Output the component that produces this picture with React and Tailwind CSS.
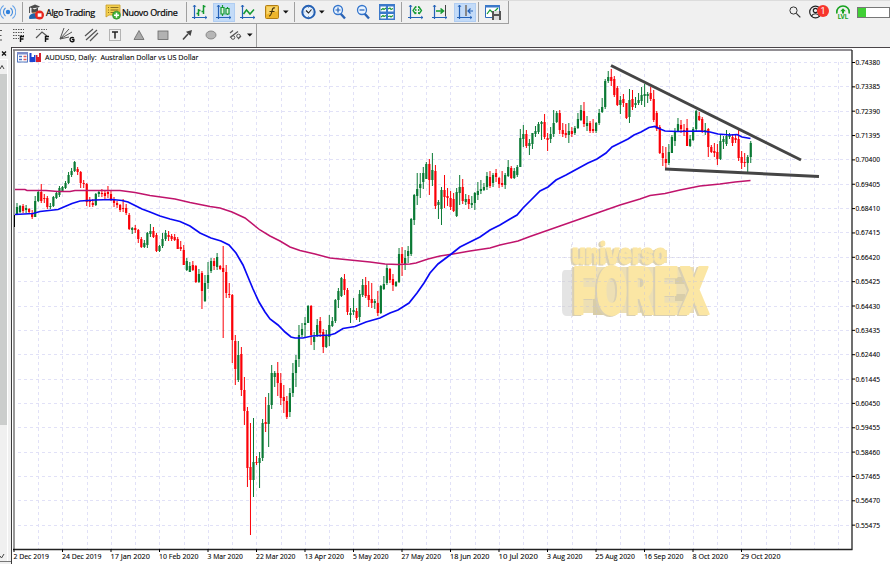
import React from 'react'

const STEP = 3.032
const FIRST_X = 17

// direction, high, body top, body bottom, low
const candleData = `
g 203 207 214 215|g 205 206 212 213|r 204 206 211 213|g 205 208 210 213|r 208 209 212 213|r 210 213 217 219|g 196 201 217 217|g 191 192 201 202|r 184 192 201 203|r 194 198 199 203
r 196 198 207 209|g 203 206 207 209|g 196 197 206 207|g 191 193 198 199|g 186 188 195 197|g 186 187 191 192|g 181 183 188 189|g 172 175 183 184|g 168 171 175 177|g 161 162 171 172
r 167 169 172 175|r 171 172 183 188|r 180 183 184 188|r 183 184 202 206|r 197 201 202 207|r 199 203 205 207|g 193 194 205 206|g 190 192 194 197|r 189 193 194 197|r 191 193 196 199
r 186 192 194 198|r 191 194 200 201|r 197 199 203 207|r 201 203 205 208|r 204 205 210 212|r 199 208 209 212|r 204 208 213 215|r 213 215 229 230|g 227 228 230 234|r 225 228 230 233
r 229 230 239 243|r 237 239 247 248|g 240 243 247 248|g 232 233 245 248|g 224 231 234 237|r 227 231 237 238|r 233 235 251 252|g 245 246 251 252|g 233 239 246 248|g 230 233 239 241
r 231 235 237 241|r 234 236 239 241|r 234 237 240 241|r 237 239 249 249|r 241 247 249 251|r 245 250 265 265|g 258 261 270 271|g 262 266 272 272|r 261 265 270 271|r 265 266 282 283
g 269 274 282 283|r 271 273 291 309|g 275 283 301 302|g 262 275 283 289|g 258 261 271 273|r 258 261 266 270|g 253 257 267 270|r 265 266 269 270|r 246 268 272 338|r 265 272 293 298
r 283 294 295 298|r 294 295 340 363|r 335 341 369 385|g 341 355 380 382|r 347 354 390 396|r 377 390 411 425|r 407 411 468 487|r 423 467 480 535|g 418 462 480 497|r 456 462 463 465
g 452 458 463 488|g 419 423 458 461|r 397 422 424 432|g 393 405 424 447|g 365 373 405 409|g 371 373 377 387|r 362 373 383 396|r 373 383 398 405|r 385 397 401 413|r 396 401 417 419
g 388 393 412 417|g 363 373 393 397|g 355 360 373 387|g 325 335 359 367|g 323 329 335 337|g 317 323 325 337|g 305 306 323 323|r 305 306 335 345|g 332 337 342 350|g 319 325 335 337
r 317 321 333 337|r 329 332 347 353|g 330 335 347 348|g 315 325 337 346|g 317 321 326 327|g 299 300 321 323|g 288 291 300 308|g 277 278 296 297|r 274 279 290 295|r 288 290 312 315
g 308 313 315 323|g 298 310 312 315|r 308 311 318 320|g 290 294 317 322|g 279 285 295 297|r 277 285 296 298|r 281 295 300 307|r 283 299 303 308|g 299 301 303 309|r 291 303 313 316
g 285 286 313 314|g 276 284 289 290|g 264 268 283 285|r 268 269 280 283|r 274 279 285 291|g 281 282 286 287|g 248 254 282 283|r 247 254 263 276|g 250 258 264 270|g 246 251 256 263
g 218 219 254 256|g 194 195 220 225|g 173 189 196 205|g 173 184 188 198|g 167 173 182 189|g 162 164 179 179|r 159 164 180 195|g 153 170 180 186|r 165 171 206 209|g 200 202 205 219
g 187 190 209 225|r 175 190 197 208|r 188 196 198 206|r 191 198 207 210|r 193 199 211 212|g 188 192 216 217|g 175 187 193 205|r 179 187 201 204|g 194 199 202 205|r 195 199 204 209
g 196 203 205 208|g 192 193 203 210|g 182 191 195 200|g 180 189 191 194|g 183 187 190 191|g 172 176 187 190|r 171 177 186 188|g 173 175 183 187|r 169 173 177 182|r 177 178 184 188
r 171 183 185 187|g 173 175 185 189|g 160 167 176 177|r 166 168 178 179|g 168 171 178 179|g 165 167 175 177|g 129 138 167 167|g 125 134 139 147|r 130 134 146 148|g 139 143 146 155
g 133 133 144 149|g 126 131 134 137|g 122 124 132 134|g 121 122 124 140|r 114 122 137 139|r 133 138 140 151|g 127 134 139 143|g 110 123 134 137|g 111 113 122 123|r 110 113 130 134
r 123 130 134 137|r 124 133 135 138|g 123 131 135 143|r 127 131 134 137|g 126 128 133 135|g 113 119 128 129|g 105 110 120 121|r 102 111 124 127|g 116 123 126 131|r 121 123 131 133
r 119 129 131 133|g 122 123 131 133|g 109 113 123 125|g 98 107 112 113|g 79 81 107 109|g 71 77 81 83|r 69 77 81 86|r 76 79 95 97|r 86 88 105 106|g 96 100 105 114
r 94 99 103 107|r 103 103 118 119|g 89 100 117 123|r 90 99 107 110|g 97 103 105 108|g 93 100 103 105|g 87 95 101 105|g 84 94 96 107|g 92 94 96 103|r 87 93 99 101
r 90 99 120 122|r 111 113 129 131|r 125 127 153 154|r 146 153 158 166|r 147 159 163 168|g 144 152 163 165|g 135 137 153 153|g 128 131 141 146|g 118 124 131 132|r 120 125 129 133
r 124 130 131 136|r 119 128 146 146|g 135 139 146 147|g 127 129 140 141|g 110 111 129 131|r 112 116 120 121|r 117 119 131 133|g 123 130 132 135|r 128 129 147 157|r 145 147 152 153
r 143 151 153 157|r 144 152 159 165|g 135 141 159 160|g 136 139 142 149|g 130 136 144 146|g 133 135 137 139|r 134 137 143 146|r 134 138 140 143|r 129 139 158 161|r 151 157 163 169
r 153 162 163 167|g 155 157 163 173|g 141 143 157 163
`

const candles = candleData
  .trim()
  .split(/[|\n]/)
  .map((row, i) => {
    const [dir, ...v] = row.split(' ')
    const [high, top, bottom, low] = v.map(Number)
    return { x: FIRST_X + i * STEP, up: dir === 'g', high, top, bottom, low }
  })

const fastAverage =
  '15,214.5 33,213.5 40,211.5 58,209.5 65,206.5 72,203.5 80,201 95,200 112,199.5 122,200.5 128,202 135,205.5 142,209 150,212 160,216 170,219 180,221.5 190,226 200,233 211,238 221,241 229,245 236,253 243,265 248,277 253,289 259,302 265,312 270,319 278,325 285,332 291,337 295,338 303,338 312,336 330,335 335,333.5 343,328.5 355,326.5 366,322 380,318 390,313 398,310 409,303 417,293 424,283 430,273 438,264 450,255 460,247 472,241 480,237 490,230 500,225 510,219 517,215 523,208 531,200 540,191 548,187 556,180 566,175 577,169 588,163 597,159 606,153 612,147 620,143 628,139 634,135 641,132 649,127.5 655,126.5 659,128.5 665,131 677,131.5 700,131 710,132 718,134 730,135 737,134.5 742,137 750.5,138.5'

const slowAverage =
  '15,189.5 25,189.5 27,190.5 46,190.5 58,191.5 70,191.5 75,190.5 120,190.5 135,192.5 150,195.5 175,199 190,202.5 210,206.5 220,208 232,212 245,218 260,230 270,236 280,241 290,247 300,250.5 315,254 330,258 345,259.5 370,262 385,264 398,264.5 410,264 416,263 428,259 440,256 453,254 470,251 490,248 500,245 518,241 530,236.5 560,226 580,219 600,212 620,205 640,199 650,195.5 665,193.5 680,190 700,186 720,184 735,182 750.5,180.5'

const dates = [
  '2 Dec 2019', '24 Dec 2019', '17 Jan 2020', '10 Feb 2020', '3 Mar 2020', '22 Mar 2020', '13 Apr 2020', '5 May 2020',
  '27 May 2020', '18 Jun 2020', '10 Jul 2020', '3 Aug 2020', '25 Aug 2020', '16 Sep 2020', '8 Oct 2020', '29 Oct 2020',
]

const prices = Array.from({ length: 20 }, (_, i) => (0.7438 - i * 0.00995).toFixed(5))

function Icon({ children, w = 16, className = '' }) {
  return (
    <svg width={w} height="16" viewBox={`0 0 ${w} 16`} fill="none" className={`block shrink-0 ${className}`}>
      {children}
    </svg>
  )
}

const Separator = ({ className = '' }) => <div className={`h-[20px] w-px shrink-0 bg-[#a0a0a0] ${className}`} />

const Caret = ({ className = '' }) => (
  <svg width="6" height="4" viewBox="0 0 6 4" className={`shrink-0 ${className}`}>
    <path d="M0 .5h5.6L2.8 3.5z" fill="#111" />
  </svg>
)

// L shaped axes shared by the chart buttons
const Axes = () => (
  <g stroke="#2462b8">
    <path d="M2.5 1v14M0 13.5h15" strokeWidth="1.2" />
    <path d="M1 3l1.5-2L4 3M13 12l2 1.5-2 1.5" strokeWidth=".8" />
  </g>
)

function MainToolbar() {
  return (
    <div className="flex h-[24px] items-start border-t border-[#dcdcdc]">
      <div className="flex h-[23px] w-[509px] shrink-0 items-center border-r border-b border-[#a0a0a0]">
        <Icon>
          <circle cx="8" cy="8" r="2.2" fill="#2f80dc" />
          <path d="M5.5 4a5 5 0 0 0 0 8M10.5 4a5 5 0 0 1 0 8" stroke="#3b86dc" strokeWidth="1.1" />
          <path d="M3.6 1.5a8 8 0 0 0 0 13M12.4 1.5a8 8 0 0 1 0 13" stroke="#6aa5e8" strokeWidth="1.1" />
        </Icon>
        <Separator className="ml-[6px]" />
        <Icon className="ml-[5px]">
          <path d="M4 5.5h6V9l-3 2-3-2z" fill="#b98a62" />
          <path d="M1 14c0-3 2-4.5 5-4.5s5 1.5 5 5L1.5 15z" fill="#2263a8" />
          <path d="M1 3l6-2.5 5 2L6.500 5.500zM3.500 4.500v4l6.500-1v-4z" fill="#4b4b4b" />
          <path d="M1.500 3v6" stroke="#555" />
          <circle cx="11.500" cy="11" r="4.500" fill="#e8261d" />
          <path d="M9.700 9.300h3.800v3.500H9.700z" fill="#fff" />
        </Icon>
        <span className="ml-[2px] w-[59px] whitespace-nowrap font-['Open_Sans'] text-[9px] leading-none tracking-[-0.3px] text-black [-webkit-text-stroke:0.2px_#000]">
          Algo Trading
        </span>
        <Icon>
          <path d="M1 1h14v10H4l-3 2z" fill="#f3cf4f" stroke="#c79c24" strokeWidth=".8" />
          <path d="M3 3.500h1M5.500 3.500h8M3 6h1M5.500 6h8M3 8.500h1M5.500 8.500h4" stroke="#8c6f20" />
          <circle cx="11.500" cy="11.200" r="4" fill="#44b13c" stroke="#248821" strokeWidth=".6" />
          <path d="M9 11.200h5M11.500 8.700v5" stroke="#fff" strokeWidth="1.500" />
        </Icon>
        <span className="ml-[1px] w-[64px] whitespace-nowrap font-['Open_Sans'] text-[9px] leading-none tracking-[-0.3px] text-black [-webkit-text-stroke:0.2px_#000]">
          Nuovo Ordine
        </span>
        <Separator />
        <Icon className="ml-[5px]">
          <Axes />
          <path d="M6.500 5v7M4.500 9.500h2M6.500 6.500h2M11.500 1v9M9.500 7.500h2M11.500 2.500h2" stroke="#149a32" strokeWidth="1.500" />
        </Icon>
        <div className="ml-[5px] flex h-[19px] w-[22px] items-center justify-center bg-[#c3dbf8] ring-1 ring-[#b0cdf2] ring-inset">
          <Icon>
            <Axes />
            <path d="M6.500 1v2M6.500 10v2M11.500 3v2M11.500 10v1" stroke="#149a32" strokeWidth="1.200" />
            <path d="M5 3.500h3v6.500H5zM10 4.500h3V10h-3z" stroke="#149a32" strokeWidth="1.200" fill="#dff5e0" />
          </Icon>
        </div>
        <Icon className="ml-[5px]">
          <Axes />
          <path d="M3.500 10l3-4 3.500 4 4-4.500" stroke="#149a32" strokeWidth="1.500" />
        </Icon>
        <Icon className="ml-[8px]">
          <rect x="1.500" y="1.500" width="13" height="13" rx="1" fill="#eeb62c" stroke="#b27e14" />
          <path d="M2.500 2.500h11v5c-4 0-7 1-11 3z" fill="#f8d469" />
          <path d="M11 4c-2-.800-2.500.500-3 3s-1 5-3 5M5.500 7.500h5" stroke="#46330c" strokeWidth="1.200" />
        </Icon>
        <Caret className="ml-[3px]" />
        <Separator className="ml-[5px]" />
        <Icon className="ml-[6px]">
          <circle cx="7.500" cy="8" r="6.200" fill="#e6f1fd" stroke="#2460b4" strokeWidth="2" />
          <path d="M5 6.500L7.500 9l3-3.500" stroke="#222" strokeWidth="1.100" />
          <path d="M7.500 3v1M7.500 12v1M2.500 8h1M11.500 8h1" stroke="#789" strokeWidth=".8" />
        </Icon>
        <Caret className="ml-[2px]" />
        <Icon className="ml-[6px]">
          <path d="M9.500 9.500l4.500 5" stroke="#2b64b5" strokeWidth="2.400" />
          <circle cx="7" cy="6" r="4.500" fill="#e8f3ff" stroke="#3475cc" strokeWidth="1.300" />
          <path d="M4.500 6h5M7 3.500v5" stroke="#2462b8" strokeWidth="1.200" />
        </Icon>
        <Icon className="ml-[8px]">
          <path d="M9.500 9.500l4.500 5" stroke="#2b64b5" strokeWidth="2.400" />
          <circle cx="7" cy="6" r="4.500" fill="#e8f3ff" stroke="#3475cc" strokeWidth="1.300" />
          <path d="M4.500 6h5" stroke="#2462b8" strokeWidth="1.200" />
        </Icon>
        <Icon className="ml-[8px]">
          <path d="M0 0h16v16H0z" fill="#3c79ca" />
          <path d="M1.500 2.500h5.500v5H1.500zM9 2.500h5.500v5H9zM1.500 10h5.500v4.500H1.500zM9 10h5.500v4.500H9z" fill="#fff" />
          <path d="M2 6l2-1.500 1 1L7 4M9 5l2-1 1 1.500 2-1M2 13l2-1.500 1 1 2-1M9 12.500l2-.5 1 1 2-1.500" stroke="#189433" strokeWidth="1.100" />
        </Icon>
        <Separator className="ml-[6px]" />
        <Icon className="ml-[6px]">
          <Axes />
          <path d="M7.500 3L5 6.500 7.500 10M11 3l2.500 3.500L11 10" stroke="#149a32" strokeWidth="1.300" />
          <path d="M7.800 2v9M10.700 2v9" stroke="#149a32" strokeWidth="1.200" strokeDasharray="2 1" />
        </Icon>
        <Icon className="ml-[8px]">
          <Axes />
          <path d="M4 7h7M8.500 4.500L11.500 7 8.500 9.500" stroke="#149a32" strokeWidth="1.600" />
          <path d="M13.500 1v11" stroke="#444" />
        </Icon>
        <div className="ml-[6px] flex h-[19px] w-[22px] items-center justify-center bg-[#c3dbf8] ring-1 ring-[#b0cdf2] ring-inset">
          <Icon>
            <Axes />
            <path d="M9 1v11" stroke="#888" strokeWidth="2" />
            <path d="M11 7h5M13.500 4.500L11 7l2.500 2.500" stroke="#2462b8" strokeWidth="1.200" />
          </Icon>
        </div>
        <Separator className="ml-[2px]" />
        <Icon className="ml-[6px]">
          <path d="M.5 1.500h14v12H.5z" fill="#fff" stroke="#2f6cbd" />
          <path d="M0 1h15v2.500H0z" fill="#3c79ca" />
          <path d="M2 10l3-4 3 3 5-5" stroke="#149a32" strokeWidth="1.200" />
          <path d="M7 7h9v9H7z" fill="#555" />
          <path d="M9 7h5v3H9zM9 12h5v4H9z" fill="#ddd" />
        </Icon>
      </div>

      <div className="ml-auto flex h-[22px] items-center">
        <Icon w={14}>
          <circle cx="5.500" cy="6.500" r="3.600" stroke="#333" />
          <path d="M8.300 9.300l4 4" stroke="#333" strokeWidth="1.200" />
        </Icon>
        <div className="relative ml-[7px]">
          <Icon w={20}>
            <circle cx="6.500" cy="8" r="5.800" stroke="#222" strokeWidth="1.200" />
            <circle cx="6.500" cy="6.500" r="2.200" stroke="#222" strokeWidth="1.200" />
            <path d="M2.500 12c1.500-3 6.500-3 8 0" stroke="#222" strokeWidth="1.200" />
          </Icon>
          <span className="absolute top-[1px] left-[8px] flex h-[12px] w-[12px] items-center justify-center rounded-full bg-[#f7352c] font-['Roboto'] text-[9px] leading-none text-white">
            1
          </span>
        </div>
        <div className="ml-[7px] flex w-[14px] flex-col items-center">
          <svg width="14" height="9" viewBox="0 0 14 9" fill="none">
            <path d="M1 8.500C0 4 3.500 1 7 1s7 3 6 7.500" stroke="#17a21f" strokeWidth="1.600" />
            <path d="M7 3.200l2.800 3H8V8.500H6V6.200H4.200z" fill="#17a21f" />
          </svg>
          <span className="font-['Roboto'] text-[6.500px] leading-[6px] font-bold text-[#17a21f]">LVL</span>
        </div>
        <div className="ml-[7px] h-[11px] w-[33px] border border-[#777] bg-white">
          <div className="h-full w-[8px] bg-[#40cf35]" />
        </div>
      </div>
    </div>
  )
}

function DrawingToolbar() {
  return (
    <div className="flex h-[23px] w-[257px] items-center border-r border-[#a0a0a0] pb-px">
      <svg width="3" height="12" viewBox="0 0 3 12" fill="none" className="shrink-0">
        <path d="M0 1.500h2M0 6.500h1.500M0 11h2" stroke="#555" />
      </svg>
      <Icon className="ml-[9px]">
        <path d="M1 2.500h11M1 5.500h11M1 8.500h11M1 11.500h6" stroke="#555" strokeDasharray="1.500 1" />
        <path d="M8.500 15V9.500H12M8.500 12h3" stroke="#111" strokeWidth="1.400" />
      </Icon>
      <Icon className="ml-[7px]">
        <path d="M1 2.500h11" stroke="#666" strokeDasharray="1.500 1" />
        <path d="M1 11l6-6 5 4" stroke="#555" strokeWidth="1.200" />
        <path d="M10.500 15V9.500H14M10.500 12h3" stroke="#111" strokeWidth="1.400" />
      </Icon>
      <Icon className="ml-[8px]">
        <path d="M1 12L5 1M1 12l9-10M1 12l12-7M1 12l9-2" stroke="#555" />
        <path d="M14.800 11a2.200 2.200 0 1 0 .1 3v-1.500h-2" stroke="#111" strokeWidth="1.300" />
      </Icon>
      <Icon className="ml-[9px]">
        <path d="M1 9l8-7M2 13L13 3M6 14l8-8" stroke="#555" strokeWidth="1.200" />
      </Icon>
      <Icon className="ml-[7px]">
        <rect x="2.500" y="2.500" width="11" height="11" stroke="#777" strokeDasharray="1 1" />
        <path d="M5 5h6M8 5v6.500" stroke="#222" strokeWidth="1.500" />
      </Icon>
      <Icon className="ml-[8px]">
        <path d="M8 3.500L13 12.500H3z" fill="#aaa" stroke="#666" strokeWidth=".8" />
      </Icon>
      <Icon className="ml-[8px]">
        <rect x="3" y="4" width="10" height="8.500" fill="#b2b2b2" stroke="#666" strokeWidth=".8" />
      </Icon>
      <Icon className="ml-[8px]">
        <path d="M4 12.500L9 7" stroke="#444" strokeWidth="1.600" />
        <path d="M13 3l-1.500 6-4.500-4.300z" fill="#444" />
      </Icon>
      <Icon className="ml-[8px]">
        <ellipse cx="8" cy="8" rx="5" ry="4" fill="#b6b6b6" stroke="#777" strokeWidth=".8" />
      </Icon>
      <Icon className="ml-[8px]">
        <path d="M3 6l3-2.500M3 10.500l8-6M11 12l3-3" stroke="#555" strokeWidth="1.200" />
        <circle cx="6" cy="10.500" r="1.800" stroke="#555" />
        <circle cx="11.500" cy="9" r="1.800" stroke="#555" />
      </Icon>
      <Caret className="ml-[4px]" />
    </div>
  )
}

function SideRail() {
  return (
    <div className="flex w-[11px] shrink-0 flex-col bg-[#f0f0f0]">
      <svg width="8" height="12" viewBox="0 0 8 12">
        <path d="M2 4.500l4 4M6 4.500l-4 4" stroke="#111" strokeWidth="1.300" />
      </svg>
      <div className="flex w-[8px] grow flex-col border-t border-r border-[#fff]">
        <svg width="7" height="14" viewBox="0 0 7 14">
          <path d="M0 9l2-3.500L4 9" fill="none" stroke="#444" />
        </svg>
        <div className="h-[351px] bg-[#cbcdcc]" />
        <div className="grow" />
        <svg width="7" height="14" viewBox="0 0 7 14">
          <path d="M0 9l1.500 2L4 7" fill="none" stroke="#444" />
        </svg>
      </div>
      <div className="h-[3px] border-t border-[#777]" />
    </div>
  )
}

function Watermark() {
  return (
    <g fontFamily="Inter, Roboto, sans-serif" fontWeight="900" strokeLinejoin="round">
      <path d="M571 270h-6q-3 0-3 5v35q0 6 5 6h10v-46z" fill="#e4e4e4" />
      {/* side faces of the raised letters */}
      <path d="M574 267h120v46H574z" fill="#eddfb4" />
      <path d="M596 279h6v7h-6zM593 295h8l6 20h-14zM640 268h4v44h-4zM675 277h10v7h-10zM675 294h10v7h-10z" fill="#d8cda9" />
      <path d="M572 250h95v13h-95z" fill="#ece0bc" />
      <g fill="#fbe6a4" stroke="#fbe6a4" className="[filter:drop-shadow(-2px_1px_0_#d9cfb2)]">
        <text x="572" y="264" fontSize="28" strokeWidth="1" textLength="95" lengthAdjust="spacingAndGlyphs">universo</text>
        <text x="573" y="314" fontSize="64" strokeWidth="2" textLength="137" lengthAdjust="spacingAndGlyphs">FOREX</text>
      </g>
    </g>
  )
}

function Chart() {
  return (
    <svg width="879" height="517" viewBox="11 47 879 517" className="block shrink-0">
      <rect x="11" y="47" width="879" height="517" fill="#fff" />
      <path d="M11 47.500h879" stroke="#4a4549" />
      <path d="M11.500 47v517" stroke="#3c3c3c" />
      <path d="M13 50h839" stroke="#6e6a70" strokeWidth="1.500" />
      <path d="M14 50v500" stroke="#777" strokeWidth="1.500" />

      <g stroke="#e1e1f7" strokeDasharray="3 3" shapeRendering="crispEdges">
        {prices.map((p, i) => (
          <line key={p} x1="18" x2="851" y1={62.5 + i * 24.35} y2={62.5 + i * 24.35} />
        ))}
        {Array.from({ length: 34 }, (_, i) => (
          <line key={i} x1={38.5 + i * 24.25} x2={38.5 + i * 24.25} y1="62" y2="549" />
        ))}
      </g>

      <Watermark />
      <g stroke="#c9c6d8" strokeDasharray="3 3" opacity="0.45" shapeRendering="crispEdges">
        <path d="M562 257.500h150M562 281.500h150M562 306.500h150M571.500 244v74M596.500 244v74M620.500 244v74M644.500 244v74M669.500 244v74M693.500 244v74" />
      </g>

      {candles.map((c) => (
        <g key={c.x} fill={c.up ? '#0b7a35' : '#fb0007'}>
          <rect x={c.x - 0.5} y={c.high} width="1" height={c.low - c.high} />
          <rect x={c.x - 1.1} y={c.top} width="2.2" height={Math.max(c.bottom - c.top, 1)} />
        </g>
      ))}
      <path d="M14.500 215v12" stroke="#000" />

      <polyline points={slowAverage} fill="none" stroke="#c0146c" strokeWidth="1.5" />
      <polyline points={fastAverage} fill="none" stroke="#0a0af5" strokeWidth="1.7" />
      <g stroke="#454545" strokeWidth="3">
        <path d="M611 65.500L801 160" />
        <path d="M665 169l154 7.500" />
      </g>

      <path d="M13 549.500h839.500M852 50v500" stroke="#222" fill="none" strokeWidth="1.300" />
      <g fill="#000" stroke="#000" strokeWidth=".1" fontFamily="'Open Sans', sans-serif">
        {prices.map((p, i) => (
          <g key={p}>
            <path d={`M852 ${62.5 + i * 24.35}h3`} strokeWidth="1" />
            <text x="855.5" y={65 + i * 24.35} fontSize="7.300" textLength="24.500" lengthAdjust="spacingAndGlyphs">
              {p}
            </text>
          </g>
        ))}
        {dates.map((d, i) => (
          <g key={d}>
            <path d={`M${14 + i * 48.5} 549v3`} strokeWidth="1" />
            <text
              x={13.5 + i * 48.5}
              y="558.5"
              fontSize="7.300"
              textLength={d.length === 11 ? 39.5 : 35.5}
              lengthAdjust="spacingAndGlyphs"
            >
              {d}
            </text>
          </g>
        ))}
        <text x="45" y="60.3" fontSize="7.300" textLength="153.500" lengthAdjust="spacingAndGlyphs">
          AUDUSD, Daily:&#160; Australian Dollar vs US Dollar
        </text>
      </g>

      {/* one click trading and depth of market */}
      <g>
        <rect x="17.500" y="52.500" width="10" height="9.500" fill="#fff" stroke="#5578bd" />
        <path d="M17 52h11v2.500H17z" fill="#7d8cc9" />
        <path d="M19 56.500h3M19 59.500h3" stroke="#4a76c8" strokeWidth="1.500" />
        <path d="M23.500 56.500h3M23.500 59.500h3" stroke="#e35a5a" strokeWidth="1.500" />
        <path d="M29.500 53h2v4h2.500v-2h1.500v7h-6z" fill="#1b45d2" />
        <path d="M36 55h1.500v2H39v-4h2v9h-5z" fill="#d61f2f" />
      </g>
    </svg>
  )
}

function App() {
  return (
    <div className="flex h-[564px] w-[890px] flex-col overflow-hidden bg-[#f0f0f0]">
      <MainToolbar />
      <DrawingToolbar />
      <div className="flex h-[517px]">
        <SideRail />
        <Chart />
      </div>
    </div>
  )
}

export default App
